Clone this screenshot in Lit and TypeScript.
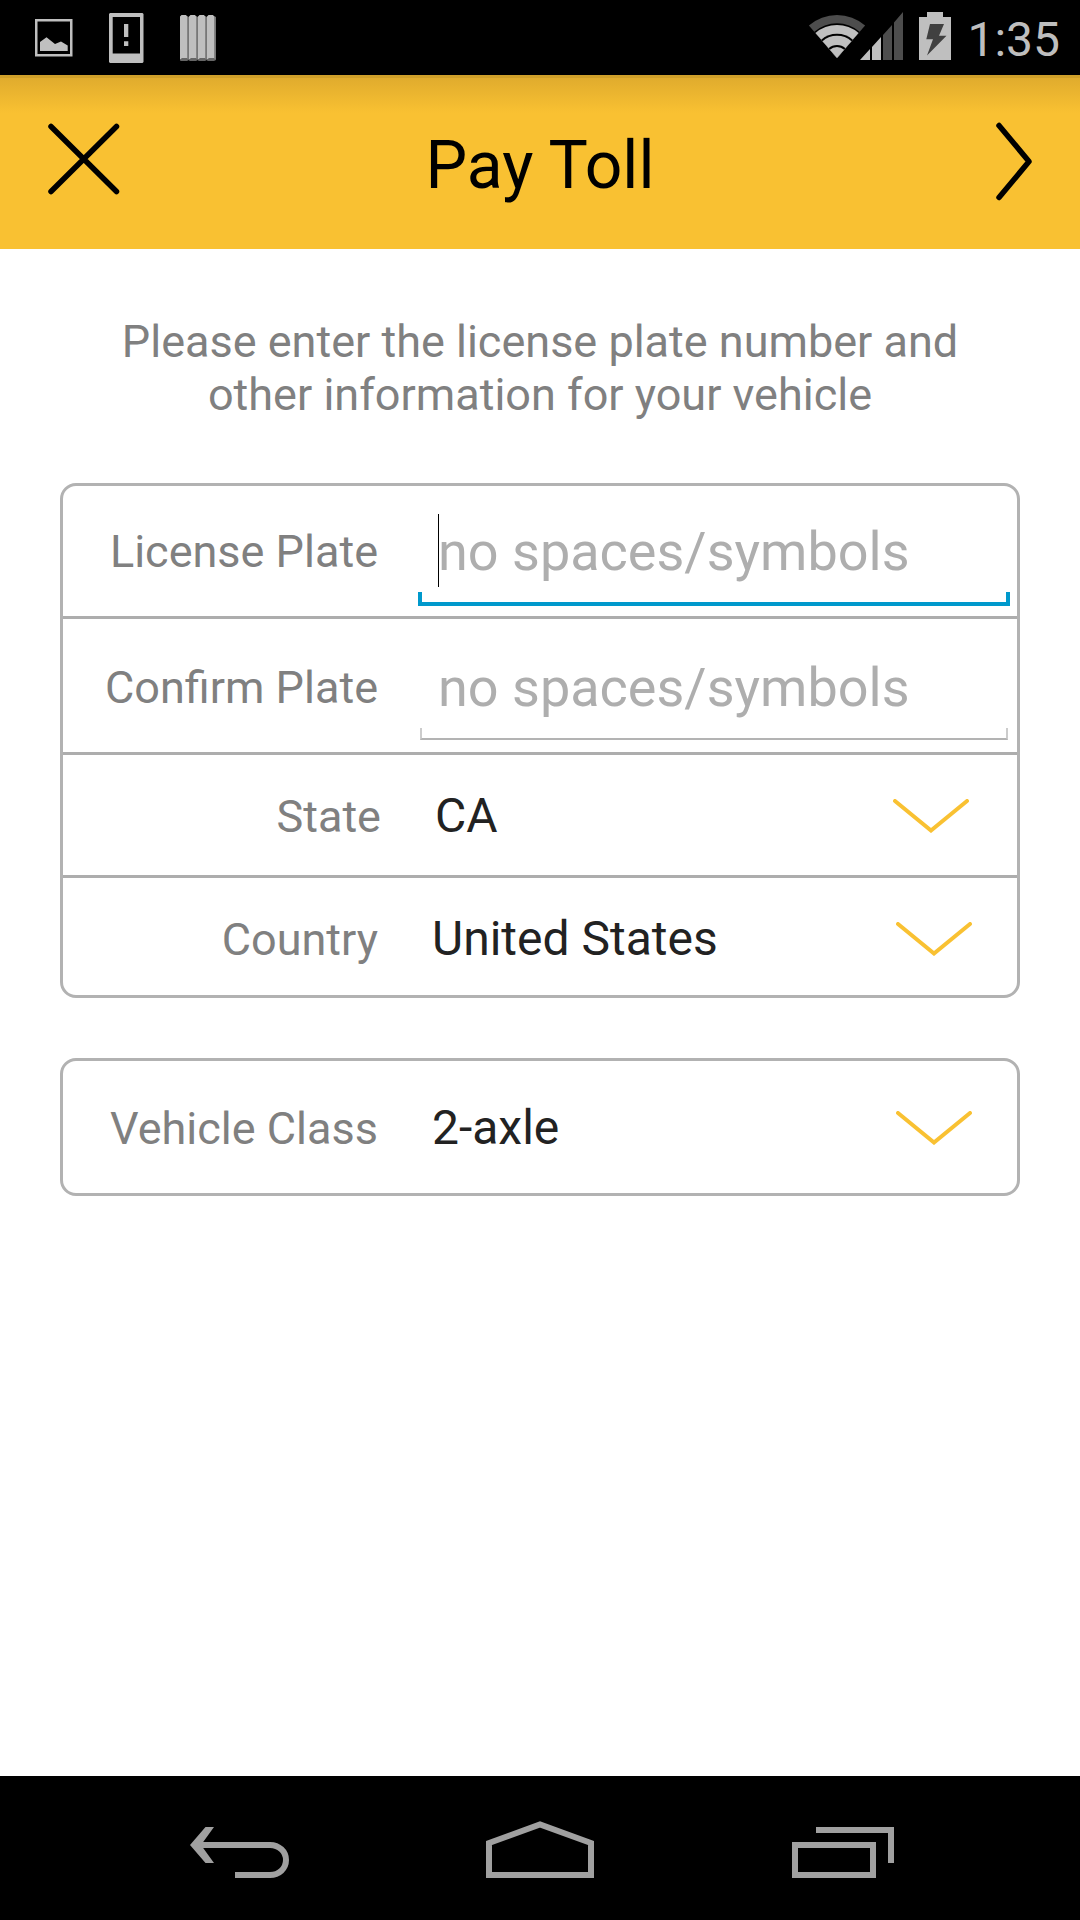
import { LitElement, html, css, svg } from "lit";
import { customElement, property } from "lit/decorators.js";

const wedge = (r: number) => {
  const dx = r * 0.654;
  const dy = r * 0.757;
  return `M30 58L${30 - dx} ${58 - dy}A${r} ${r} 0 0 1 ${30 + dx} ${58 - dy}Z`;
};

const WIFI: Array<[number, string]> = [
  [43, "#4d4d4d"],
  [34.7, "#000"],
  [33, "#bfbfbf"],
  [24.2, "#000"],
  [22.2, "#bfbfbf"],
  [13, "#000"],
  [11, "#bfbfbf"],
];

@customElement("status-bar")
class StatusBar extends LitElement {
  static styles = css`
    :host {
      display: block;
      background: #000;
    }
    .bar {
      display: flex;
      align-items: center;
      justify-content: space-between;
      height: 75px;
      padding: 0 20px 0 35px;
    }
    .group {
      display: flex;
      align-items: center;
    }
    .notices {
      gap: 36px;
    }
    .system {
      gap: 16px;
    }
    svg {
      display: block;
    }
    .clock {
      padding-top: 4px;
      font-size: 48px;
      line-height: 56px;
      color: #bebebe;
    }
  `;

  render() {
    return html`
      <div class="bar">
        <div class="group notices">
          <svg width="38" height="75" viewBox="0 0 38 75" aria-hidden="true">
            <path d="M1.25 20.25H36.25V55.25H1.25Z" fill="none" stroke="#bfbfbf" stroke-width="2.5" />
            <path d="M5 51V42L11.5 37.3L20 44L26 41.5L32.7 45.5V51Z" fill="#bfbfbf" />
          </svg>
          <svg width="35" height="75" viewBox="0 0 35 75" aria-hidden="true">
            <path
              d="M1 13H33.5L34.5 14V62L33.5 63H1L0 62V14ZM3.7 17V53.5H31V17ZM15 24H19.3V37H15ZM15 41.3H19.3V46H15Z"
              fill="#bfbfbf"
              fill-rule="evenodd"
            />
          </svg>
          <svg width="36" height="75" viewBox="0 0 36 75" aria-hidden="true">
            ${[0, 9, 18, 27].map(
              (x) => svg`
                <path d=${`M${x} 61L${x + 2} 57H${x + 9}V60L${x + 7} 61Z`} fill="#666" />
                <path d=${`M${x + 7} 16L${x + 9} 17V59H${x + 7}Z`} fill="#777" />
                <path d=${`M${x} 16.5L${x + 1.5} 15H${x + 6}L${x + 7.2} 16.5V58H${x + 2}L${x} 60Z`} fill="#bfbfbf" />
              `
            )}
          </svg>
        </div>
        <div class="group system">
          <svg width="96" height="75" viewBox="0 0 96 75" aria-hidden="true">
            ${WIFI.map(([r, fill]) => svg`<path d=${wedge(r)} fill=${fill} />`)}
            <path d="M53 60L63 49V60ZM65 60V47L74 37V60Z" fill="#bfbfbf" />
            <path d="M76 60V35L85 25V60ZM87 60V22.5L96 12V60Z" fill="#4d4d4d" />
          </svg>
          <svg width="32" height="75" viewBox="0 0 32 75" aria-hidden="true">
            <path d="M8 12H24V17H32V60H0V17H8Z" fill="#bfbfbf" />
            <path d="M11 24H25L20 35.7H27.5L8 55.5L14 39.3H7.3Z" fill="#404040" />
          </svg>
          <span class="clock">1:35</span>
        </div>
      </div>
    `;
  }
}

@customElement("title-bar")
class TitleBar extends LitElement {
  static styles = css`
    :host {
      display: block;
    }
    .bar {
      display: flex;
      align-items: center;
      justify-content: space-between;
      height: 174px;
      background:
        linear-gradient(#cfa02a, #cfa02a) 0 0 / 100% 3px no-repeat,
        linear-gradient(#deaa2d, #f9c132 38px);
    }
    .title {
      margin: 0;
      padding-top: 8px;
      font-size: 66px;
      font-weight: 400;
      line-height: 78px;
      color: #000;
    }
    .action {
      width: 166px;
      height: 174px;
      padding: 0;
      border: 0;
      background: none;
      cursor: pointer;
    }
    .icon {
      display: block;
      fill: none;
      stroke: #000;
      stroke-width: 5.5;
      stroke-linecap: round;
      stroke-linejoin: round;
    }
  `;

  render() {
    return html`
      <header class="bar">
        <button class="action" aria-label="Close">
          <svg class="icon" width="166" height="174" viewBox="0 0 166 174">
            <path d="M51 51.5L116.5 116.5M116.5 51.5L51 116.5" />
          </svg>
        </button>
        <h1 class="title">Pay Toll</h1>
        <button class="action" aria-label="Next">
          <svg class="icon" width="166" height="174" viewBox="0 0 166 174">
            <path d="M85 50.5L115 86.5L85 122.5" />
          </svg>
        </button>
      </header>
    `;
  }
}

@customElement("plate-input")
class PlateInput extends LitElement {
  static styles = css`
    :host {
      display: block;
    }
    .row {
      display: grid;
      grid-template-columns: 315px minmax(0, 1fr);
      column-gap: 40px;
      align-items: end;
      padding: 0 7px 10px 0;
    }
    .label {
      padding-bottom: 28px;
      font-size: 45px;
      line-height: 53px;
      text-align: right;
      color: #808080;
    }
    .field {
      display: grid;
      align-items: center;
    }
    .input,
    .caret {
      grid-area: 1 / 1;
    }
    .input {
      box-sizing: border-box;
      width: 100%;
      height: 74px;
      padding: 3px 20px 0;
      border: 0;
      outline: 0;
      background: none;
      font-family: inherit;
      font-size: 54px;
      color: #222;
    }
    .input::placeholder {
      color: #aeaeae;
      opacity: 1;
    }
    .caret {
      width: 1px;
      height: 73px;
      margin-left: 20px;
      background: #000;
    }
    .line {
      height: 10px;
      margin: 5px 2px 2px;
      border: solid #ccc;
      border-width: 0 2px 2px;
      border-bottom-color: #b3b3b3;
    }
    .line.active {
      margin: 5px 0 0;
      border: solid #0099cc;
      border-width: 0 4px 4px;
    }
  `;

  @property() label = "";
  @property({ type: Boolean }) active = false;

  render() {
    return html`
      <div class="row">
        <label class="label" for="plate">${this.label}</label>
        <div class="field">
          <input class="input" id="plate" type="text" placeholder="no spaces/symbols" />
          ${this.active ? html`<span class="caret"></span>` : null}
          <div class="line ${this.active ? "active" : ""}"></div>
        </div>
      </div>
    `;
  }
}

@customElement("choice-select")
class ChoiceSelect extends LitElement {
  static styles = css`
    :host {
      display: block;
    }
    .row {
      display: grid;
      grid-template-columns: 315px minmax(0, 1fr);
      column-gap: 40px;
      align-items: center;
      padding-right: 7px;
    }
    .row.inset {
      padding: 0 10px 0 3px;
    }
    .label {
      font-size: 45px;
      line-height: 53px;
      text-align: right;
      color: #808080;
    }
    .field {
      display: grid;
      align-items: center;
    }
    .select,
    .chevron {
      grid-area: 1 / 1;
    }
    .select {
      width: 100%;
      height: 56px;
      padding: 0 120px 0 14px;
      border: 0;
      outline: 0;
      appearance: none;
      background: none;
      font-family: inherit;
      font-size: 48px;
      line-height: 56px;
      color: #222;
    }
    .chevron {
      justify-self: end;
      margin-right: 37px;
      pointer-events: none;
      fill: none;
      stroke: #f9c132;
      stroke-width: 4;
      stroke-linecap: round;
    }
  `;

  @property() label = "";
  @property({ attribute: false }) options: string[] = [];
  @property({ type: Boolean }) inset = false;

  render() {
    return html`
      <div class="row ${this.inset ? "inset" : ""}">
        <label class="label" for="choice">${this.label}</label>
        <div class="field">
          <select class="select" id="choice">
            ${this.options.map((o) => html`<option>${o}</option>`)}
          </select>
          <svg class="chevron" width="78" height="34" viewBox="0 0 78 34" aria-hidden="true">
            <path d="M3 2L39 31.5L75 2" />
          </svg>
        </div>
      </div>
    `;
  }
}

@customElement("nav-bar")
class NavBar extends LitElement {
  static styles = css`
    :host {
      display: block;
      background: #000;
    }
    .bar {
      display: flex;
      justify-content: center;
      height: 144px;
    }
    .key {
      flex: 0 1 300px;
      display: flex;
      align-items: center;
      justify-content: center;
      padding: 0;
      border: 0;
      background: none;
      cursor: pointer;
    }
    .icon {
      fill: none;
      stroke: #a0a0a0;
      stroke-width: 6;
    }
  `;

  render() {
    return html`
      <nav class="bar">
        <button class="key" aria-label="Back">
          <svg class="icon" width="110" height="144" viewBox="0 0 110 144">
            <path d="M50 99H85C94 99 101 92.5 101 84S94 69 85 69H11" />
            <path d="M20.5 51H29L16 69L29 87H20.5L5 69Z" fill="#a0a0a0" stroke="none" />
          </svg>
        </button>
        <button class="key" aria-label="Home">
          <svg class="icon" width="110" height="144" viewBox="0 0 110 144">
            <path d="M4 99V67L55 48.5L106 67V99Z" />
          </svg>
        </button>
        <button class="key" aria-label="Recent apps">
          <svg class="icon" width="110" height="144" viewBox="0 0 110 144">
            <path d="M10 69H88V99H10ZM31 54H106V87" />
          </svg>
        </button>
      </nav>
    `;
  }
}

@customElement("app-root")
class AppRoot extends LitElement {
  static styles = css`
    :host {
      display: block;
      font-family: Roboto, "Liberation Sans", sans-serif;
    }
    .screen {
      display: flex;
      flex-direction: column;
      min-height: 100vh;
      background: #fff;
    }
    .content {
      flex: 1;
      display: flex;
      flex-direction: column;
      gap: 60px;
      padding: 66px 60px 60px;
    }
    .intro {
      margin: 0 0 2px;
      padding: 0 50px;
      font-size: 45px;
      line-height: 53px;
      text-align: center;
      color: #808080;
    }
    .card {
      display: flex;
      flex-direction: column;
      border: 3px solid #b2b2b2;
      border-radius: 16px;
    }
    .entry + .entry,
    .entry + .choice,
    .choice + .choice {
      border-top: 3px solid #adadad;
    }
    .entry {
      padding-top: 27px;
    }
    .entry + .entry {
      padding-top: 30px;
    }
    .choice {
      padding: 33px 0 31px;
    }
    .choice:last-child {
      padding-bottom: 28px;
    }
    .choice:only-child {
      padding: 39px 0 37px;
    }
  `;

  render() {
    return html`
      <div class="screen">
        <status-bar></status-bar>
        <title-bar></title-bar>
        <main class="content">
          <p class="intro">Please enter the license plate number and other information for your vehicle</p>
          <section class="card">
            <plate-input class="entry" label="License Plate" active></plate-input>
            <plate-input class="entry" label="Confirm Plate"></plate-input>
            <choice-select class="choice" label="State" .options=${["CA"]} inset></choice-select>
            <choice-select class="choice" label="Country" .options=${["United States"]}></choice-select>
          </section>
          <section class="card">
            <choice-select class="choice" label="Vehicle Class" .options=${["2-axle"]}></choice-select>
          </section>
        </main>
        <nav-bar></nav-bar>
      </div>
    `;
  }
}
